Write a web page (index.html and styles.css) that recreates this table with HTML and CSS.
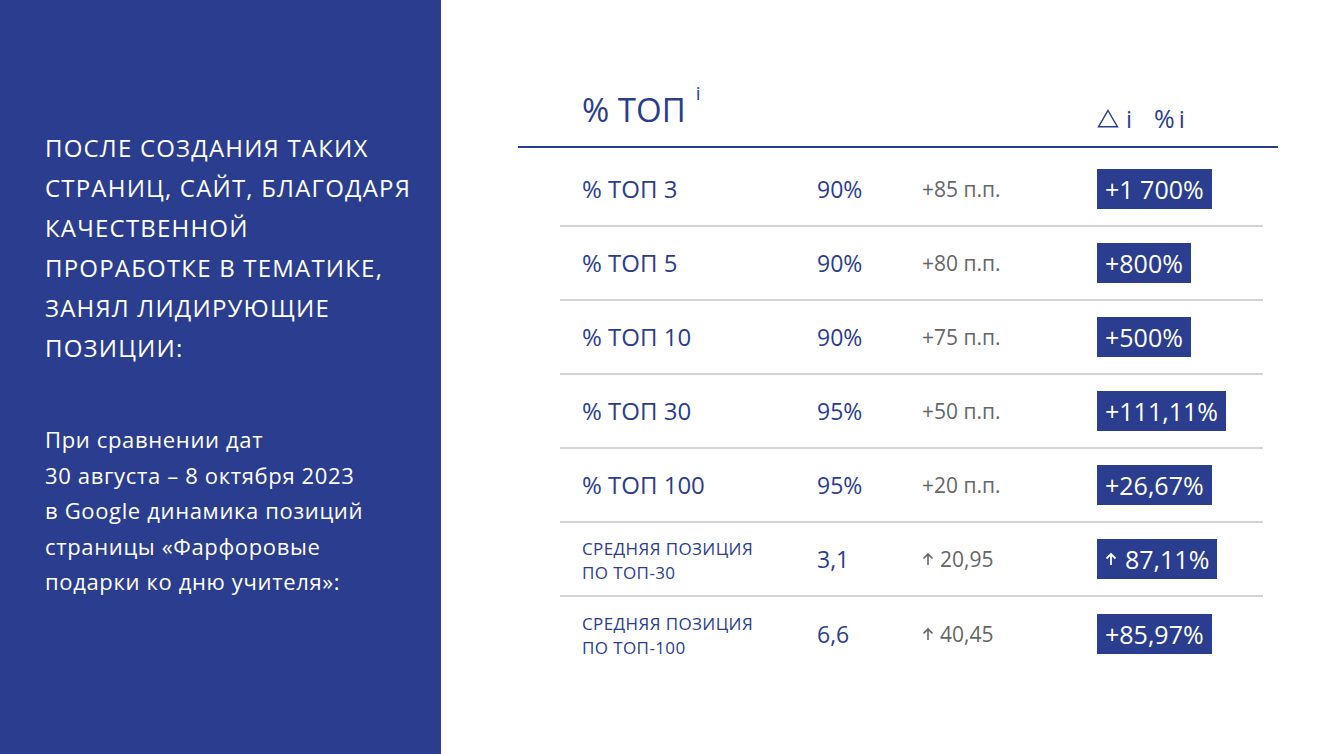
FILE: index.html
```html
<!DOCTYPE html>
<html lang="ru">
<head>
<meta charset="utf-8">
<title>ТОП</title>
<link rel="stylesheet" href="styles.css">
</head>
<body>
<aside class="side">
  <h1 class="side-title">После создания таких<br>страниц, сайт, благодаря<br>качественной<br>проработке в тематике,<br>занял лидирующие<br>позиции:</h1>
  <p class="side-text">При сравнении дат<br>30 августа – 8 октября 2023<br>в Google динамика позиций<br>страницы «Фарфоровые<br>подарки ко дню учителя»:</p>
</aside>
<main class="content">
  <div class="head">
    <div class="head-title">% ТОП<span class="sup">i</span></div>
    <div class="head-sub">
      <svg class="tri" viewBox="0 0 22 19" width="22" height="19"><path d="M11 1.5 L20.5 17.8 L1.5 17.8 Z" fill="none" stroke="#2b3d8e" stroke-width="1.4" stroke-linejoin="miter"/></svg><span class="sub-i">i</span><span class="sub-pct">%</span><span class="sub-i2">i</span>
    </div>
  </div>
  <div class="rows">
    <div class="row"><div class="lbl">% ТОП 3</div><div class="val">90%</div><div class="chg">+85 п.п.</div><div class="badge">+1 700%</div></div>
    <div class="row"><div class="lbl">% ТОП 5</div><div class="val">90%</div><div class="chg">+80 п.п.</div><div class="badge">+800%</div></div>
    <div class="row"><div class="lbl">% ТОП 10</div><div class="val">90%</div><div class="chg">+75 п.п.</div><div class="badge">+500%</div></div>
    <div class="row"><div class="lbl">% ТОП 30</div><div class="val">95%</div><div class="chg">+50 п.п.</div><div class="badge">+111,11%</div></div>
    <div class="row"><div class="lbl">% ТОП 100</div><div class="val">95%</div><div class="chg">+20 п.п.</div><div class="badge">+26,67%</div></div>
    <div class="row"><div class="lbl small">Средняя позиция<br>по ТОП-30</div><div class="val">3,1</div><div class="chg"><svg class="arr" viewBox="0 0 12 14" width="12" height="14"><path d="M6 13 V2 M1.5 6.5 L6 2 L10.5 6.5" fill="none" stroke="#666" stroke-width="1.6"/></svg>20,95</div><div class="badge"><svg class="arr" viewBox="0 0 12 14" width="12" height="14"><path d="M6 13 V2 M1.5 6.5 L6 2 L10.5 6.5" fill="none" stroke="#fff" stroke-width="1.8"/></svg>87,11%</div></div>
    <div class="row"><div class="lbl small">Средняя позиция<br>по ТОП-100</div><div class="val">6,6</div><div class="chg"><svg class="arr" viewBox="0 0 12 14" width="12" height="14"><path d="M6 13 V2 M1.5 6.5 L6 2 L10.5 6.5" fill="none" stroke="#666" stroke-width="1.6"/></svg>40,45</div><div class="badge">+85,97%</div></div>
  </div>
</main>
</body>
</html>
```
FILE: styles.css
```css
* { box-sizing: border-box; }
html, body { margin: 0; padding: 0; }
body {
  width: 1340px;
  height: 754px;
  display: flex;
  font-family: "Open Sans", "Noto Sans", sans-serif;
  background: #fff;
  overflow: hidden;
}
.side {
  width: 441px;
  flex: none;
  background: #2b3d8e;
  color: #fff;
  padding: 128px 10px 0 45px;
}
.side-title {
  margin: 0;
  font-size: 24px;
  font-weight: 400;
  line-height: 40px;
  text-transform: uppercase;
  letter-spacing: 1.2px;
  white-space: nowrap;
}
.side-text {
  margin: 54px 0 0;
  font-size: 22px;
  line-height: 35.5px;
  letter-spacing: 0.65px;
  white-space: nowrap;
}
.content {
  flex: 1;
  padding: 88px 62px 0 77px;
  color: #2b3d8e;
}
.head {
  display: grid;
  grid-template-columns: 515px auto;
  align-items: end;
  padding: 0 0 14px 64px;
  border-bottom: 2px solid #2b3d8e;
}
.head-title {
  font-size: 33px;
  line-height: 44px;
  height: 44px;
}
.sup {
  font-size: 19px;
  line-height: 0;
  margin-left: 10px;
  vertical-align: 22px;
}
.head-sub {
  display: flex;
  align-items: center;
  height: 28px;
  font-size: 24px;
}
.tri { display: block; }
.sub-i { margin-left: 7px; }
.sub-pct { margin-left: 22px; font-size: 25px; }
.sub-i2 { margin-left: 4px; }
.rows {
  margin: 5px 15px 0 42px;
}
.row {
  display: grid;
  grid-template-columns: 235px 105px 175px auto;
  align-items: center;
  height: 74px;
  padding-left: 22px;
  border-bottom: 2px solid #d4d4d4;
}
.row:last-child { border-bottom: none; }
.lbl {
  font-size: 24px;
  line-height: 30px;
}
.lbl.small {
  font-size: 17px;
  line-height: 24px;
  letter-spacing: 0.4px;
  text-transform: uppercase;
  padding-top: 4px;
}
.val {
  font-size: 23px;
  line-height: 30px;
}
.chg {
  display: flex;
  align-items: center;
  font-size: 21px;
  line-height: 30px;
  color: #666;
}
.chg .arr { margin-right: 6px; }
.badge {
  justify-self: start;
  display: flex;
  align-items: center;
  height: 40px;
  padding: 0 8px;
  background: #2b3d8e;
  color: #fff;
  font-size: 25px;
}
.badge .arr { margin-right: 8px; }
```
